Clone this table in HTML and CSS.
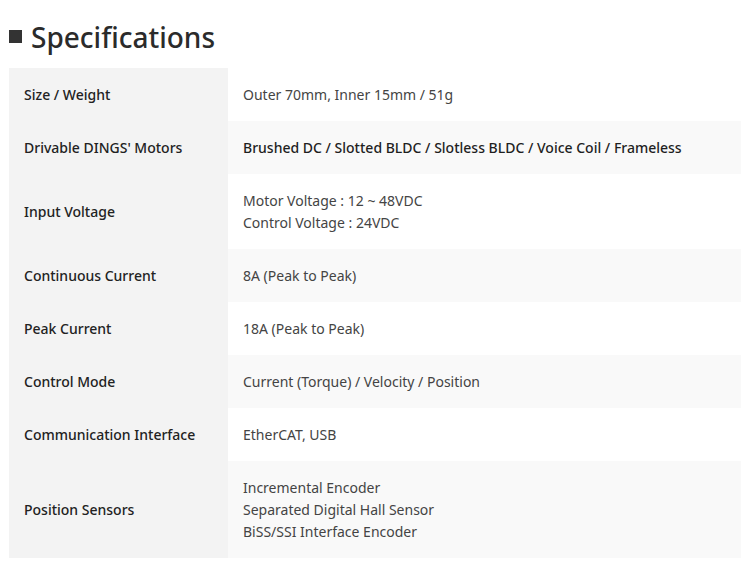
FILE: index.html
```html
<!DOCTYPE html>
<html>
<head>
<meta charset="utf-8">
<link rel="stylesheet" href="styles.css">
</head>
<body>
<div class="page">
  <h1 class="title"><span class="bullet"></span>Specifications</h1>
  <table class="spec">
    <tr><th>Size / Weight</th><td>Outer 70mm, Inner 15mm / 51g</td></tr>
    <tr class="alt"><th>Drivable DINGS' Motors</th><td class="strong">Brushed DC / Slotted BLDC / Slotless BLDC / Voice Coil / Frameless</td></tr>
    <tr><th>Input Voltage</th><td>Motor Voltage : 12 ~ 48VDC<br>Control Voltage : 24VDC</td></tr>
    <tr class="alt"><th>Continuous Current</th><td>8A (Peak to Peak)</td></tr>
    <tr><th>Peak Current</th><td>18A (Peak to Peak)</td></tr>
    <tr class="alt"><th>Control Mode</th><td>Current (Torque) / Velocity / Position</td></tr>
    <tr><th>Communication Interface</th><td>EtherCAT, USB</td></tr>
    <tr class="alt"><th>Position Sensors</th><td>Incremental Encoder<br>Separated Digital Hall Sensor<br>BiSS/SSI Interface Encoder</td></tr>
  </table>
</div>
</body>
</html>
```
FILE: styles.css
```css
html, body {
  margin: 0;
  padding: 0;
  background: #fff;
}
.page {
  padding: 0 9px;
  font-family: "Noto Sans", "Open Sans", sans-serif;
  color: #333;
}
.title {
  margin: 0;
  padding-top: 17px;
  height: 40px;
  line-height: 40px;
  font-size: 28px;
  font-weight: 500;
  color: #2b2b2b;
  display: flex;
  align-items: center;
  margin-bottom: 11px;
}
.bullet {
  display: inline-block;
  width: 13px;
  height: 13px;
  background: #333;
  margin-right: 9px;
  margin-top: -1px;
}
.spec {
  width: 732px;
  border-collapse: collapse;
  font-size: 14px;
  line-height: 22px;
}
.spec th {
  width: 219px;
  text-align: left;
  font-weight: 500;
  background: #f3f3f3;
  color: #222;
  padding: 15.5px 15px;
  vertical-align: middle;
  box-sizing: border-box;
}
.spec td {
  padding: 15.5px 15px;
  color: #444;
  background: #fff;
  vertical-align: middle;
}
.spec tr.alt td {
  background: #f9f9f9;
}
.spec td.strong {
  font-weight: 500;
  color: #1f1f1f;
}
```
